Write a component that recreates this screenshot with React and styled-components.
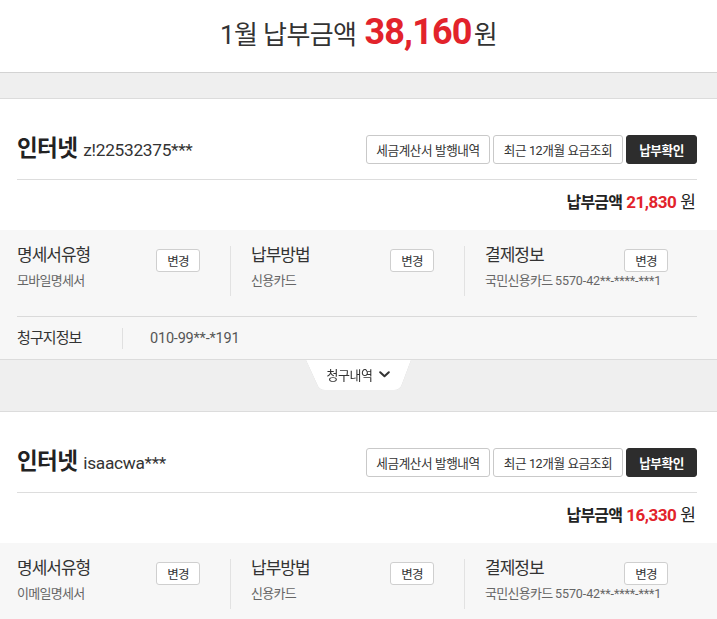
import React from "react";
import styled, { createGlobalStyle } from "styled-components";

const Global = createGlobalStyle`
  html, body { margin: 0; padding: 0; background: #fff; }
  body {
    font-family: Roboto, "Noto Sans CJK KR", sans-serif;
    color: #333;
    -webkit-font-smoothing: antialiased;
  }
  * { box-sizing: border-box; }
`;

const RED = "#e2232b";

const Page = styled.div`
  width: 717px;
`;

const Header = styled.header`
  height: 73px;
  display: flex;
  align-items: center;
  justify-content: center;
  border-bottom: 1px solid #d3d3d3;
  padding-bottom: 6px;
`;

const HeaderTitle = styled.h1`
  margin: 0;
  font-size: 26px;
  font-weight: 400;
  color: #333;
  letter-spacing: -0.6px;
  line-height: 40px;
  display: flex;
  align-items: baseline;
`;

const BigAmount = styled.strong`
  color: ${RED};
  font-size: 36px;
  font-weight: 700;
  letter-spacing: -0.8px;
  margin: 0 2px 0 8px;
`;

const Band = styled.div`
  height: ${(p) => p.$h}px;
  background: #efefef;
  border-bottom: 1px solid #dcdcdc;
  ${(p) => (p.$top ? "border-top: 1px solid #dcdcdc;" : "")}
  display: flex;
  justify-content: center;
  align-items: flex-start;
`;

const Tab = styled.button`
  position: relative;
  isolation: isolate;
  width: 105px;
  height: 30px;
  border: 0;
  background: transparent;
  padding: 0 0 2px 0;
  display: flex;
  align-items: center;
  justify-content: center;
  gap: 7px;
  font-family: inherit;
  font-size: 13px;
  letter-spacing: -0.5px;
  color: #333;
  filter: drop-shadow(0 0 0.6px #c4c4c4);
  &::before {
    content: "";
    position: absolute;
    inset: 0;
    background: #fff;
    clip-path: path("M0 0 H105 L96 24 Q94 30 88 30 H19 Q13 30 11 24 Z");
    z-index: -1;
  }
`;

const CardTop = styled.section`
  padding: 36px 20px 0 17px;
`;

const HeadRow = styled.div`
  display: flex;
  justify-content: space-between;
  align-items: center;
  height: 45px;
  padding-bottom: 15px;
  border-bottom: 1px solid #dddddd;
`;

const Title = styled.h2`
  margin: 0;
  display: flex;
  align-items: baseline;
  gap: 6px;
  font-size: 22.5px;
  font-weight: 700;
  letter-spacing: -0.6px;
  color: #222;
  line-height: 29px;
`;

const Account = styled.span`
  font-size: 17.3px;
  font-weight: 400;
  letter-spacing: -0.3px;
  color: #333;
`;

const Actions = styled.div`
  display: flex;
  gap: 3px;
`;

const ActionButton = styled.button`
  height: 29px;
  padding: 0 4px 1px;
  border: 1px solid ${(p) => (p.$dark ? "#2d2d2d" : "#c9c9c9")};
  border-radius: 3px;
  background: ${(p) => (p.$dark ? "#2d2d2d" : "#fff")};
  color: ${(p) => (p.$dark ? "#fff" : "#333")};
  font-family: inherit;
  font-size: 12.6px;
  font-weight: ${(p) => (p.$dark ? 700 : 400)};
  letter-spacing: -0.4px;
  width: ${(p) => p.$w}px;
  white-space: nowrap;
`;

const AmountRow = styled.div`
  display: flex;
  justify-content: flex-end;
  align-items: baseline;
  gap: 4px;
  padding: 10px 2px 15px 0;
  line-height: 24px;
  font-size: 16px;
  font-weight: 700;
  letter-spacing: -0.8px;
  color: #222;
`;

const AmountNum = styled.span`
  color: ${RED};
  font-size: 17px;
  letter-spacing: -0.5px;
`;

const AmountUnit = styled.span`
  font-weight: 400;
  font-size: 17px;
`;

const InfoBox = styled.div`
  background: #f7f7f7;
  padding: 0 20px 0 17px;
`;

const Columns = styled.div`
  display: flex;
  padding: 16px 0 20px;
  border-bottom: 1px solid #dadada;
`;

const Column = styled.div`
  box-sizing: content-box;
  width: 183px;
  min-height: 50px;
  padding: 0 30px 0 20px;
  border-right: 1px solid #e2e2e2;
  &:first-child { padding-left: 0; }
  &:last-child { border-right: 0; padding-right: 0; }
`;

const ColHead = styled.div`
  display: flex;
  justify-content: space-between;
  align-items: flex-start;
  height: 26px;
`;

const Label = styled.div`
  font-size: 17px;
  line-height: 18px;
  letter-spacing: -1px;
  color: #333;
`;

const SmallButton = styled.button`
  margin-top: 3px;
  width: 44px;
  height: 23px;
  padding: 0 0 1px;
  border: 1px solid #cfcfcf;
  border-radius: 3px;
  background: #fff;
  font-family: inherit;
  font-size: 12.5px;
  letter-spacing: -0.8px;
  color: #333;
`;

const Value = styled.div`
  margin-top: 0;
  font-size: 13px;
  line-height: 18px;
  letter-spacing: -0.7px;
  color: #666;
  white-space: nowrap;
`;

const Digits = styled.span`
  font-size: 12.5px;
  letter-spacing: -0.1px;
`;

const BillingRow = styled.div`
  display: flex;
  align-items: center;
  height: 42px;
`;

const BillingLabel = styled.div`
  width: 106px;
  height: 21px;
  line-height: 21px;
  border-right: 1px solid #e0e0e0;
  font-size: 15px;
  letter-spacing: -0.9px;
  color: #333;
`;

const BillingValue = styled.div`
  padding-left: 27px;
  font-size: 14.5px;
  letter-spacing: -0.2px;
  color: #555;
`;

const Chevron = () => (
  <svg width="11" height="7" viewBox="0 0 11 7" aria-hidden="true">
    <path d="M1.2 1.2 L5.5 5.3 L9.8 1.2" fill="none" stroke="#333" strokeWidth="2" strokeLinecap="round" strokeLinejoin="round" />
  </svg>
);

const Bill = ({ account, amount, statement, billing }) => (
  <>
    <CardTop>
      <HeadRow>
        <Title>
          인터넷<Account>{account}</Account>
        </Title>
        <Actions>
          <ActionButton $w={124}>세금계산서 발행내역</ActionButton>
          <ActionButton $w={130}>최근 12개월 요금조회</ActionButton>
          <ActionButton $w={71} $dark>납부확인</ActionButton>
        </Actions>
      </HeadRow>
      <AmountRow>
        납부금액 <AmountNum>{amount}</AmountNum>
        <AmountUnit>원</AmountUnit>
      </AmountRow>
    </CardTop>
    <InfoBox>
      <Columns>
        <Column>
          <ColHead>
            <Label>명세서유형</Label>
            <SmallButton>변경</SmallButton>
          </ColHead>
          <Value>{statement}</Value>
        </Column>
        <Column>
          <ColHead>
            <Label>납부방법</Label>
            <SmallButton>변경</SmallButton>
          </ColHead>
          <Value>신용카드</Value>
        </Column>
        <Column>
          <ColHead>
            <Label>결제정보</Label>
            <SmallButton>변경</SmallButton>
          </ColHead>
          <Value>
            국민신용카드 <Digits>5570-42**-****-***1</Digits>
          </Value>
        </Column>
      </Columns>
      {billing && (
        <BillingRow>
          <BillingLabel>청구지정보</BillingLabel>
          <BillingValue>{billing}</BillingValue>
        </BillingRow>
      )}
    </InfoBox>
  </>
);

export default function App() {
  return (
    <Page>
      <Global />
      <Header>
        <HeaderTitle>
          1월 납부금액<BigAmount>38,160</BigAmount>원
        </HeaderTitle>
      </Header>
      <Band $h={26} />
      <Bill account="z!22532375***" amount="21,830" statement="모바일명세서" billing="010-99**-*191" />
      <Band $h={53} $top>
        <Tab>
          청구내역 <Chevron />
        </Tab>
      </Band>
      <Bill account="isaacwa***" amount="16,330" statement="이메일명세서" />
    </Page>
  );
}
